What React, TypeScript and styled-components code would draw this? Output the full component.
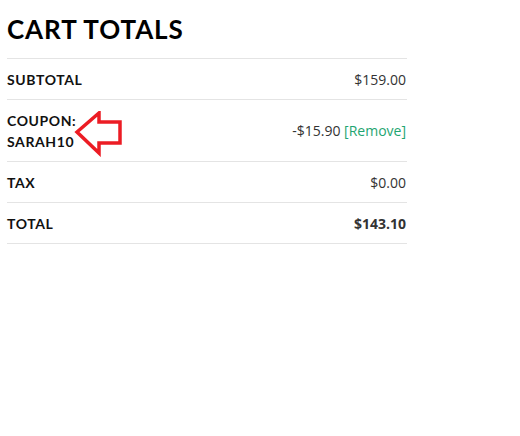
import React from "react";
import styled, { createGlobalStyle } from "styled-components";

const Global = createGlobalStyle`
  html, body { margin: 0; padding: 0; background: #fff; }
  body { font-family: "Lato", "Noto Sans", sans-serif; color: #111; }
`;

const Page = styled.div`
  padding: 12px 0 0 7px;
  width: 400px;
`;

const Title = styled.h2`
  margin: 0 0 12px;
  font-family: "Lato", sans-serif;
  font-weight: 700;
  font-size: 26px;
  line-height: 34px;
  letter-spacing: 0.9px;
  color: #000;
`;

const Table = styled.div`
  border-top: 1px solid #e4e4e4;
`;

const Row = styled.div<{ $tall?: boolean }>`
  display: flex;
  align-items: center;
  justify-content: space-between;
  height: ${(p) => (p.$tall ? 61 : 40)}px;
  border-bottom: 1px solid #e4e4e4;
`;

const Label = styled.div`
  position: relative;
  font-family: "Lato", sans-serif;
  font-weight: 700;
  font-size: 14px;
  line-height: 21px;
  letter-spacing: 0.6px;
  color: #111;
`;

const Value = styled.div<{ $bold?: boolean }>`
  font-family: "Open Sans", sans-serif;
  font-size: 14px;
  font-weight: ${(p) => (p.$bold ? 700 : 400)};
  color: #333;
  padding-right: 1px;
`;

const RemoveLink = styled.a`
  color: #1fa572;
  text-decoration: none;
`;

const Arrow = styled.svg`
  position: absolute;
  left: 67px;
  top: 1px;
`;

export default function App() {
  return (
    <>
      <Global />
      <Page>
        <Title>CART TOTALS</Title>
        <Table>
          <Row>
            <Label>SUBTOTAL</Label>
            <Value>$159.00</Value>
          </Row>
          <Row $tall>
            <Label>
              COUPON:
              <br />
              SARAH10
              <Arrow width="50" height="46" viewBox="0 0 50 46">
                <polygon
                  points="3,21 25,2 25,11 46,11 46,32 25,32 25,42"
                  fill="none"
                  stroke="#ec1c24"
                  strokeWidth="3.5"
                  strokeLinejoin="miter"
                />
              </Arrow>
            </Label>
            <Value>
              -$15.90 <RemoveLink href="#">[Remove]</RemoveLink>
            </Value>
          </Row>
          <Row>
            <Label>TAX</Label>
            <Value>$0.00</Value>
          </Row>
          <Row>
            <Label>TOTAL</Label>
            <Value $bold>$143.10</Value>
          </Row>
        </Table>
      </Page>
    </>
  );
}
